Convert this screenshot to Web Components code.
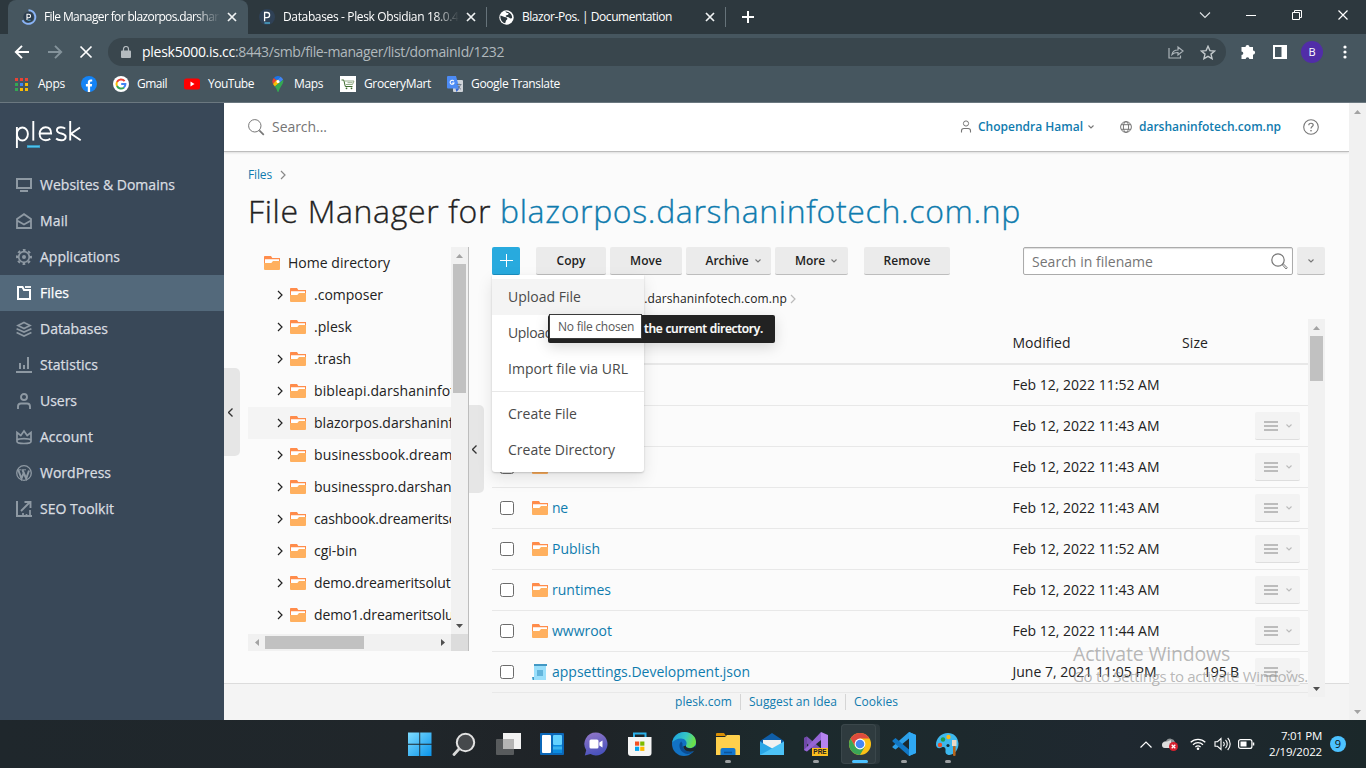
<!DOCTYPE html>
<html lang="en">
<head>
<meta charset="utf-8">
<title>File Manager</title>
<style>
html,body{margin:0;height:100%;overflow:hidden}
body{font:14px/20px "Open Sans","Noto Sans",sans-serif;color:#222;background:#fbfbfb}
</style>
</head>
<body>
<desktop-screen>
  <browser-chrome slot="chrome"></browser-chrome>
  <plesk-sidebar slot="side">
    <side-item icon="monitor" w="135">Websites &amp; Domains</side-item>
    <side-item icon="mail" w="28">Mail</side-item>
    <side-item icon="gear" w="80">Applications</side-item>
    <side-item icon="files" w="29" active>Files</side-item>
    <side-item icon="db" w="68">Databases</side-item>
    <side-item icon="stats" w="58">Statistics</side-item>
    <side-item icon="user" w="37">Users</side-item>
    <side-item icon="crown" w="53">Account</side-item>
    <side-item icon="wp" w="71">WordPress</side-item>
    <side-item icon="seo" w="74">SEO Toolkit</side-item>
  </plesk-sidebar>
  <plesk-main slot="main"></plesk-main>
  <win-taskbar slot="task"></win-taskbar>
</desktop-screen>
<script>
const S=(w,h,body,vb)=>`<svg width="${w}" height="${h}" viewBox="${vb||`0 0 ${w} ${h}`}" fill="none" xmlns="http://www.w3.org/2000/svg">${body}</svg>`;
const st=(d,c='currentColor',w=1.5,x='')=>`<path d="${d}" stroke="${c}" stroke-width="${w}" ${x}/>`;
const fl=(d,c='currentColor',x='')=>`<path d="${d}" fill="${c}" ${x}/>`;
const ICONS={
 /* browser */
 pleskload:S(16,16,`<circle cx="7.500" cy="8" r="5.200" fill="#2d3e50"/>${st('M7.500 1.200a6.800 6.800 0 1 1-6 10','#8ab4f8',2)}${st('M6 11V5.300h1.800a1.700 1.700 0 0 1 0 3.500H6','#fff',1.100)}${st('M6.500 11.200h3','#53bce6',.9)}`),
 pleskfav:S(16,16,`<circle cx="8" cy="8" r="8" fill="#2f4156"/>${st('M5.600 12.300V3.500h2.400a2.600 2.600 0 0 1 0 5.200H5.600','#fff',1.300)}${st('M5.500 14h5.500','#53bce6',1.200)}`),
 world:S(15,15,`<circle cx="7.500" cy="7.500" r="7.200" fill="#fff"/>${fl('M1.500 5.500C3.500 6 5 7.200 6.800 7.300c1.800.2 2 2 .7 2.700-1 .6-.5 2-1.400 3.300C3 13 .8 9 1.500 5.500zM6 1.500c1 .3 1.200 1.800 2.700 1.500 1.300-.3 1 1.200.3 1.700-.8.7-2.500.3-2.300 1.400.3 1.300 3 .6 3.600 1.700.5.8 1.700.6 2.700.4.600-3-1.500-6.700-7-6.700z','#2d383e')}`),
 close:S(10,10,st('M1 1l8 8M9 1l-8 8','#f0f3f4',1.700)),
 plus:S(12,12,st('M6 0v12M0 6h12','#fff',2)),
 wchev:S(12,8,st('M1 1.500l5 5 5-5','#dfe3e5',1.100)),
 wmin:S(10,10,st('M0 5.500h10','#fff',1)),
 wmax:S(10,10,st('M.5 2.500h7v7h-7zM2.500 2.500v-2h7v7h-2','#fff',1)),
 wclose:S(10,10,st('M.5.5l9 9M9.500.5l-9 9','#fff',1.200)),
 back:S(16,14,st('M15 7H2M8 .8L1.800 7 8 13.200','#fff',1.900)),
 fwd:S(16,14,st('M1 7h13M8 .8L14.200 7 8 13.200','#84939b',1.900)),
 stop:S(14,14,st('M1.500 1.500l11 11M12.500 1.500l-11 11','#fff',1.700)),
 lock:S(10,12,fl('M1 4.500h8a1 1 0 0 1 1 1V11a1 1 0 0 1-1 1H1a1 1 0 0 1-1-1V5.500a1 1 0 0 1 1-1z','#b4bbbf')+st('M2.500 5V3a2.500 2.500 0 0 1 5 0v2','#b4bbbf',1.200)),
 share:S(16,14,st('M1 3v10h11.500v-2.500','#abb3b8',1.200)+st('M4 9.500C4.500 6.500 6.500 5 10 5V2l5 4-5 4V7.500C7.500 7.400 5.500 8 4 9.500z','#abb3b8',1.200)),
 star:S(16,15,st('M8 1.300l1.900 4.300 4.700.4-3.600 3.100 1.100 4.600L8 11.300l-4.100 2.400L5 9.100 1.400 6l4.700-.4z','#c3c9cc',1.400)),
 ext:S(16,16,fl('M5.500 3a2 2 0 0 1 4 0H13v3.500a2 2 0 0 1 0 4.200V15H9.300a1.800 1.800 0 0 0-3.600 0H1.500v-4a1.800 1.800 0 0 0 0-3.600V3z','#fff')),
 panel:S(14,14,fl('M0 0h14v14H0zM2 2v10h6.500V2z','#fff','fill-rule="evenodd"')),
 dots:S(4,14,'<g fill="#fff"><circle cx="2" cy="2" r="1.600"/><circle cx="2" cy="7" r="1.600"/><circle cx="2" cy="12" r="1.600"/></g>'),
 apps:S(13,13,[['#ea4335','#ea4335','#ea4335'],['#34a853','#4285f4','#fbbc05'],['#34a853','#fbbc05','#fbbc05']].map((r,j)=>r.map((c,i)=>`<rect x="${i*5}" y="${j*5}" width="3" height="3" fill="${c}"/>`).join('')).join('')),
 fb:S(16,16,`<circle cx="8" cy="8" r="8" fill="#1483f5"/>${fl('M6.800 16v-5.600H4.900V8.100h1.900V6.500c0-2 1.100-3 2.900-3l1.500.1v1.900h-.9c-.9 0-1.200.5-1.200 1.100v1.500h2l-.3 2.300H9.100V16z','#fff')}`),
 google:S(16,16,`<circle cx="8" cy="8" r="8" fill="#fff"/>${st('M11.600 5.200A4.500 4.500 0 0 0 4 6','#ea4335',2)}${st('M4 5.900a4.600 4.600 0 0 0 0 4.200','#fbbc05',2)}${st('M4 10a4.500 4.500 0 0 0 7 1.400','#34a853',2)}${st('M8.200 8h4.200a4.500 4.500 0 0 1-1.500 3.500','#4285f4',2)}`),
 yt:S(16,12,`<rect y=".5" width="16" height="11" rx="2.500" fill="#f00"/>${fl('M6.500 3.500l4 2.500-4 2.500z','#fff')}`),
 maps:S(12,16,fl('M6 0a5.500 5.500 0 0 0-4.200 2l3 2.500L8.500.7A5 5 0 0 0 6 0z','#1a73e8')+fl('M1.800 2A5.400 5.400 0 0 0 1 8l3.800-3.500z','#ea4335')+fl('M8.500.7a5.500 5.500 0 0 1 2.600 3L7.500 7 4.800 4.500z','#4285f4')+fl('M1 8l1.800 2.600L7.900 6.500 5 3.600z','#fbbc04')+fl('M11.200 3.800C12 8 8 10 6.800 15.300c-.2.9-1.300.9-1.500 0-.5-2-1.500-3.500-2.500-4.700z','#34a853')+'<circle cx="6" cy="5.400" r="1.500" fill="#fff"/>'),
 grocery:S(16,16,`<rect width="16" height="16" fill="#fff"/>${st('M1.500 4h2.300l1.500 6.500h7.200','#3d6b2c',1)}${st('M5 5h9l-1.500 3.500H6M7.500 6.700h5','#8aa67e',.9)}<circle cx="6.500" cy="12.300" r=".9" fill="#3d6b2c"/><circle cx="11.500" cy="12.300" r=".9" fill="#3d6b2c"/>`),
 translate:S(16,16,`<rect x="6" y="4" width="10" height="12" rx="1" fill="#cfd3d8"/>${fl('M1 0h8l3.500 12.500H1a1 1 0 0 1-1-1V1a1 1 0 0 1 1-1z','#4c8bf5')}${st('M6.800 5.200A2 2 0 1 0 7 7H5.200','#fff',1.100)}${st('M9.800 8.500h4.700M12 7.500v1M13.500 8.500c-.6 2-1.700 3.500-3 4.500M11 10c.8 1.500 1.800 2.500 3 3.300','#6b7785',.9)}${fl('M9.500 16l3-3.500H8.500z','#3367d6')}`),
 /* sidebar */
 monitor:S(16,16,st('M1 2h14v9H1z','currentColor',2)+st('M4 14h8','currentColor',2)),
 mail:S(16,16,st('M1 6l7-4.800L15 6v9H1zM1 7.500l7 4 7-4','currentColor',1.800)),
 gear:S(16,16,'<circle cx="8" cy="8" r="5.300" stroke="currentColor" stroke-width="1.700"/><circle cx="8" cy="8" r="7" stroke="currentColor" stroke-width="2" stroke-dasharray="2.750 2.748" stroke-dashoffset="1.370"/><circle cx="8" cy="8" r="2" fill="currentColor"/>'),
 files:S(16,16,st('M2 2h4.500l1.500 3h6v9H2z','currentColor',2)+st('M9 2h6','currentColor',1.800)),
 db:S(16,16,st('M8 1.500l6 3-6 3-6-3z','currentColor',1.700)+st('M.6 7.800L8 11l7.400-3.200M.6 11.500L8 15l7.400-3.500','currentColor',1.700)),
 stats:S(16,16,st('M0 15h16','currentColor',2)+st('M4 12V6M8 12V8M12 12V0','currentColor',2)),
 user:S(16,16,'<circle cx="8" cy="4" r="3" stroke="currentColor" stroke-width="1.900"/>'+st('M2 16v-2.500c0-2 1.200-3 3-3h6c1.800 0 3 1 3 3V16','currentColor',1.900)),
 crown:S(16,16,st('M1 3.500v9c0 1.300 3 2 7 2s7-.7 7-2v-9l-3.800 3L8 2 4.800 6.500z','currentColor',1.700)+st('M1 11c2-1.800 12-1.800 14 0','currentColor',1.600)),
 wp:S(16,16,'<circle cx="8" cy="8" r="7.300" stroke="currentColor" stroke-width="1.300"/>'+st('M2.300 5l3.200 8.500L8 7M6.500 5l3.700 8.500L13 5.500','currentColor',2)+st('M1.500 4.800h4M6 4.800h4','currentColor',1)),
 seo:S(16,16,st('M1 0v15h15','currentColor',2)+st('M5 10l8.500-8.500M8.500 1h6V7','currentColor',1.900)+st('M7 15v-3M10.500 15v-2M14 15V9','currentColor',1.700)),
 /* plesk */
 logo:S(67,30,`<g stroke="#fff" stroke-width="1.900"><path d="M1.900 28V7"/><ellipse cx="7.400" cy="14" rx="5.500" ry="6.500"/><path d="M18.300 1v19.600"/><path d="M24.300 13.500h11.800c0-4-2.200-6.300-5.500-6.300-3.400 0-6 2.800-6 6.600s2.400 6.500 6 6.500c2 0 3.600-.6 4.700-1.500"/><path d="M50.200 8.700c-1-1-2.500-1.500-4.300-1.500-2.500 0-4 1-4 3 0 4.400 8.800 2.200 8.800 6.600 0 2.300-1.800 3.500-4.500 3.500-2.200 0-4-.6-5.100-1.800"/><path d="M55.200 1v19.600M65 7.500l-9 6.300 9.700 6.400"/></g><rect x="12" y="25" width="13" height="3" fill="#3795bd"/><path d="M12.500 26.500h12" stroke="#4fc3ea"/>`),
 search:S(17,17,'<circle cx="6.800" cy="6.800" r="6.200" stroke="currentColor" stroke-width="1"/>'+st('M11.300 11.300l4.500 4.500','currentColor',1.700)),
 mag:S(17,17,'<circle cx="7" cy="7" r="6.200" stroke="#777" stroke-width="1.200"/>'+st('M11.300 11.800l1-1 4 4-1.200 1.200z','#777',1)),
 suser:S(12,13,'<circle cx="6" cy="3.500" r="2.600" stroke="#777"/>'+st('M1.500 12.500v-1.700c0-1.500 1-2.300 2.300-2.300h4.400c1.300 0 2.300.8 2.300 2.300v1.700','#777',1.100)),
 globe:S(12,12,'<circle cx="6" cy="6" r="5.400" stroke="#777"/><ellipse cx="6" cy="6" rx="2.600" ry="5.400" stroke="#777"/>'+st('M1 3.700h10M1 8.300h10','#777',1)),
 help:S(16,16,'<circle cx="8" cy="8" r="7.300" stroke="#777" stroke-width="1.100"/>'+st('M5.800 6.200C5.800 3.500 10.300 3.700 10.200 6c0 1.500-2.200 1.700-2.200 3.500','#777',1.200)+'<rect x="7.300" y="11" width="1.400" height="1.400" fill="#777"/>'),
 down:S(6,4,st('M.5.5L3 3 5.500.5','currentColor',1.100)),
 right:S(6,10,st('M1 1l4 4-4 4','currentColor',1.200)),
 left:S(5,9,st('M4.500.5l-4 4 4 4','currentColor',1.300)),
 folder:S(16,14,fl('M0 .8A.8.8 0 0 1 .8 0H7l1.300 2H16v6H0z','#ff8c4b')+fl('M1 3.300h14V5L9 6.500V8H1z','#fff')+fl('M0 7h7.300l1.700-2h7v8a1 1 0 0 1-1 1H1a1 1 0 0 1-1-1z','#ffb05f')),
 json:S(16,16,fl('M2 0h13v2H2z','#4298c4')+fl('M2 2h12v14H0v-2h2z','#9adffb')+fl('M5 6h6v6H5z','#62b5dc')+fl('M0 13h2v3H1z','#4298c4')),
 bigplus:S(13,13,st('M6.500 0v13M0 6.500h13','#fff',1)),
 menu:S(14,10,st('M0 1h14M0 5h14M0 9h14','#bcbcbc',1.900)),
 tup:S(7,4,fl('M0 4L3.500 0 7 4z')),tdn:S(7,4,fl('M0 0l3.500 4L7 0z')),tlf:S(4,7,fl('M4 0L0 3.500 4 7z')),trt:S(4,7,fl('M0 0l4 3.500L0 7z')),
 /* taskbar */
 win:S(24,24,`<defs><linearGradient id="a" x2="1" y2="1"><stop stop-color="#7fdcff"/><stop offset="1" stop-color="#0a94ea"/></linearGradient></defs>${fl('M0 .5h11.300v11.300H0zM12.200.5h11.300v11.300H12.200zM0 12.700h11.300V24H0zM12.200 12.700h11.300V24H12.200z','url(#a)')}`),
 wsearch:S(24,24,`<circle cx="13.500" cy="10.500" r="8.700" fill="#46494c" stroke="#e2e2e2" stroke-width="2"/>${st('M7 17l-5 5.500','#d8d8d8',2.800,'stroke-linecap="round"')}`),
 tview:S(25,24,`<rect x="7" y="1" width="18" height="16" fill="#f2f2f2"/><rect x="0" y="7" width="18" height="16" rx="1" fill="#636566" opacity=".85"/><rect x="7" y="7" width="11" height="10" fill="#b4b4b4"/>`),
 widgets:S(24,22,`<rect width="24" height="22" rx="1" fill="#0b67b8"/><rect x="2" y="2" width="9" height="18" rx="1" fill="#fff"/><rect x="13" y="2" width="9" height="10" rx="1" fill="#63d1ff"/><rect x="13" y="12" width="9" height="8" fill="#0b8be0"/><path d="M13 15h9" stroke="#38b2ef" stroke-width="3"/>`),
 chat:S(24,24,`<defs><linearGradient id="b" x2="0.3" y2="1"><stop stop-color="#9578c8"/><stop offset="1" stop-color="#4b53bc"/></linearGradient></defs>${fl('M12 .5a11.500 11.500 0 1 1-5.500 21.600L.8 23.500l1.400-5.300A11.500 11.500 0 0 1 12 .5z','url(#b)')}<rect x="5.500" y="7.500" width="9" height="9" rx="1.500" fill="#fff"/>${fl('M15.300 10.500l3.200-2v7l-3.200-2z','#fff')}`),
 store:S(24,24,`${st('M6 6V1.500h11.500V6','#2cb1ea',2)}<path d="M0 5h23.500v16a3 3 0 0 1-3 3H3a3 3 0 0 1-3-3z" fill="#f5f5f5"/><path d="M7 9.500h4.200v4.200H7z" fill="#f25022"/><path d="M12.200 9.500h4.200v4.200h-4.200z" fill="#7fba00"/><path d="M7 14.700h4.200v4.200H7z" fill="#00a4ef"/><path d="M12.200 14.700h4.200v4.200h-4.200z" fill="#ffb900"/>`),
 edge:S(24,24,`<defs><linearGradient id="c" x2="1" y2=".3"><stop stop-color="#1a9fe0"/><stop offset=".6" stop-color="#35c6c6"/><stop offset="1" stop-color="#6be04b"/></linearGradient></defs><circle cx="12" cy="12" r="12" fill="#1272c4"/>${fl('M.2 10.500C1.500 4 6.500 0 12.500 0 19 0 24 4.500 24 10c0 3.500-2.600 6-6 6-3 0-4.500-1.300-4-2.500 2-3.500-1-7-5-7-4 0-7 2-8.800 4z','url(#c)')}${fl('M9.200 9.500C6 12 7 19 13 21.500c3 1 6.500 0 8.700-2.500C16 21.500 9.500 17 10.500 11.500z','#0b4c93')}${fl('M14 13.500c-.5 1.500 1 2.800 4 2.800 2.500 0 4.500-1 5.600-3L24 18l-2.300 1c-4 1.500-9.500.5-10.500-4.500z','#1e272b')}`),
 explorer:S(24,22,`${fl('M0 1a1 1 0 0 1 1-1h7l2 3H0z','#d98e04')}<path d="M0 4h9l2-2h12a1 1 0 0 1 1 1v19H0z" fill="#ffd04c"/><path d="M4.500 22v-5a2 2 0 0 1 2-2h11a2 2 0 0 1 2 2v5z" fill="#1377cf"/><path d="M8 19.500h8" stroke="#0c559c" stroke-width="1.600"/>`),
 wmail:S(24,22,`${fl('M0 8L12 0l12 8v13H0z','#0f5ea8')}${fl('M3 7h18v8l-9 5-9-5z','#f1f1f1')}${fl('M0 8.500L24 22H0z','#29a5e6')}${fl('M24 8.500V22H0z','#4dc3f7')}`),
 vs:S(24,24,fl('M0 6l3-1.500 14 12L17 24 0 9z','#7c55b8')+fl('M17 0l7 3v18l-7 3z','#b583f0')+fl('M0 18V6l3-1.500V19.500z','#6f48a8')+fl('M17 0v8L3 19.500 0 18z','#9565d6')),
 chrome:S(24,24,`<circle cx="12" cy="12" r="11" fill="#fbc116"/>${fl('M2.500 6.500A11 11 0 0 1 21.500 6.500H12L7.200 14.700z','#dd4b3e')}${fl('M2.500 6.500a11 11 0 0 0 9.500 16.500l4.800-8.300H7.200z','#3aa757')}<circle cx="12" cy="12" r="5.400" fill="#fff"/><circle cx="12" cy="12" r="4.300" fill="#4587f3"/>`),
 vscode:S(24,24,fl('M17 0l7 3v18l-7 3V6.500L3.500 17.500.5 15.500v-1L17 0z','#2b9fe8')+fl('M.5 8.500l3-2.500L17 17.500V24L.5 9.500z','#1177c4')+fl('M17 0l7 3v18l-7 3z','#2fa8f3')),
 paint:S(24,24,`${fl('M12 1C5 1 0 6.500 0 12.500 0 16 3 17 5.500 15.500c2.500-1.300 4.500 0 4 3C9 21.500 11 23 13.500 23 19 22 22.500 17.500 22.500 11.500 22 5 17.500 1 12 1z','#3db8ee')}<circle cx="4" cy="13" r="2.200" fill="#e9502b"/><circle cx="7" cy="7.500" r="2.200" fill="#1f9e48"/><circle cx="12.500" cy="5" r="2.200" fill="#f6b91a"/><circle cx="12" cy="13.500" r="1.600" fill="#16303c"/><rect x="17" y="14" width="2.600" height="10" rx="1" fill="#b5651d"/><rect x="16" y="8" width="4.500" height="6" fill="#ead9c5"/>`),
 tchev:S(12,7,st('M.5 6.500L6 1l5.500 5.500','#fff',1.200)),
 cloud:S(16,14,`${fl('M4 11a3.500 3.500 0 0 1 0-7 5 5 0 0 1 9 1v6z','#8f9496')}${fl('M3 11a3 3 0 0 1 0-6c2-.5 4-1 6-2v8z','#dcdcdc')}<circle cx="11.500" cy="9.500" r="4.500" fill="#d5202e"/>${st('M9.700 7.700l3.600 3.600M13.300 7.700l-3.600 3.600','#fff',1.300)}`),
 wifi:S(16,12,st('M.7 4.300a10.500 10.500 0 0 1 14.600 0M3 6.700a7.200 7.200 0 0 1 10 0M5.400 9a3.800 3.800 0 0 1 5.200 0','#fff',1.200)+'<circle cx="8" cy="10.700" r="1.300" fill="#fff"/>'),
 vol:S(17,14,st('M1 4.700h2.500L7 1.500v11L3.500 9.300H1z','#fff',1.100)+st('M9.300 4.800a3 3 0 0 1 0 4.400M11.500 2.800a6 6 0 0 1 0 8.400M13.700 1a8.500 8.500 0 0 1 0 12','#fff',1.100)),
 batt:S(17,10,'<rect x=".6" y=".6" width="13.300" height="8.800" rx="2" stroke="#fff" stroke-width="1.200"/><rect x="2.500" y="2.500" width="6" height="5" fill="#fff"/>'+st('M15.500 3.500v3','#fff',1.500))
};
const def=(n,html,setup)=>customElements.define(n,class extends HTMLElement{
  connectedCallback(){ if(this.shadowRoot)return; const r=this.attachShadow({mode:'open'}); r.innerHTML=typeof html==='function'?html(this):html; if(setup)setup(this,r);}
});
const A=(e,n,d='')=>e.getAttribute(n)??d;
/* icon and label for a flex row, each with its left margin */
const I=(n,ml=0,ex='')=>`<x-icon name="${n}" style="margin-left:${ml}px;${ex}"></x-icon>`;
const T=(t,w,ml=0,ex='')=>`<fit-text w="${w}" style="margin-left:${ml}px;${ex}">${t}</fit-text>`;

def('desktop-screen',`<style>:host{display:grid;width:1366px;height:768px;grid-template:103px 617px 48px / 224px 1fr;position:relative;overflow:hidden}
.c,.t{grid-column:1/3}.m{min-width:0}</style><div class="c"><slot name="chrome"></slot></div><slot name="side"></slot><div class="m"><slot name="main"></slot></div><div class="t"><slot name="task"></slot></div><os-watermark></os-watermark>`);

def('os-watermark',`<style>:host{display:flex;flex-direction:column;position:absolute;z-index:20;left:1073px;top:642px;color:rgba(140,140,140,.62)}</style>
<fit-text w="157" style="font-size:19.5px;line-height:24px">Activate Windows</fit-text><fit-text w="235" style="font-size:15px;line-height:20px">Go to Settings to activate Windows.</fit-text>`);

def('browser-tab',e=>`<style>:host{display:flex;align-items:center;height:34px;box-sizing:border-box;color:#fff;font-size:12px}
:host([active]){background:#46565f;border-radius:8px 8px 0 0;height:34px}
.t{overflow:hidden;flex:none}.fade{-webkit-mask:linear-gradient(90deg,#000 86%,transparent);mask:linear-gradient(90deg,#000 86%,transparent)}</style>
${I(A(e,'icon'),A(e,'im'))}<div class="t ${A(e,'fade')?'fade':''}" style="margin-left:${A(e,'tm')}px;width:${A(e,'tw')}px"><fit-text w="${A(e,'w')}"><slot></slot></fit-text></div>${I('close',A(e,'cm'))}`);

def('book-mark',e=>`<style>:host{display:flex;align-items:center;color:#fff;font-size:12px}</style>${I(A(e,'icon'))}${T('<slot></slot>',A(e,'w'),A(e,'gap','8'))}`);

def('browser-chrome',`<style>:host{display:flex;flex-direction:column;height:103px;background:#46565f;font-size:12px;color:#fff}
.tabs{display:flex;height:34px;background:#2d383e;padding-left:8px;box-sizing:border-box;align-items:center}
.sep{width:1px;height:20px;background:#66737a}
.bar{display:flex;height:36px;align-items:center}
.omni{display:flex;align-items:center;width:1118px;height:28px;border-radius:14px;background:#39464d;margin-left:15px;font-size:14px;flex:none}
.av{width:22px;height:22px;border-radius:50%;background:#512da8;display:flex;align-items:center;justify-content:center;font-size:11px;margin-left:14px}
.marks{display:flex;height:28px;align-items:center;border-bottom:1px solid #6b7880;padding-bottom:4px}</style>
<div class="tabs"><browser-tab active icon="pleskload" im="13" tm="7" tw="176" w="196" cm="7" fade="1" style="width:240px">File Manager for blazorpos.darshaninfo</browser-tab>
<browser-tab icon="pleskfav" im="11" tm="8" tw="176" w="182" cm="7" fade="1">Databases - Plesk Obsidian 18.0.42</browser-tab><div class="sep" style="margin-left:10px"></div>
<browser-tab icon="world" im="12" tm="8" tw="155" w="150" cm="28">Blazor-Pos. | Documentation</browser-tab><div class="sep" style="margin-left:10px"></div>
${I('plus',16)}${I('wchev',445,'margin-top:-5px')}${I('wmin',35,'margin-top:-5px')}${I('wmax',36,'margin-top:-5px')}${I('wclose',36,'margin-top:-5px')}</div>
<div class="bar">${I('back',14)}${I('fwd',17)}${I('stop',16)}<div class="omni">${I('lock',13)}${T('plesk5000.is.cc',93,11)}${T(':8443/smb/file-manager/list/domainId/1232',269,0,'color:#b1b9bd')}${I('share',664)}${I('star',16)}</div>
${I('ext',14)}${I('panel',17)}<div class="av">B</div>${I('dots',20)}</div>
<div class="marks"><book-mark icon="apps" gap="10" w="27" style="margin-left:15px">Apps</book-mark>${I('fb',16)}
<book-mark icon="google" w="30" style="margin-left:16px">Gmail</book-mark><book-mark icon="yt" w="46" style="margin-left:17px">YouTube</book-mark>
<book-mark icon="maps" w="29" gap="10" style="margin-left:18px">Maps</book-mark><book-mark icon="grocery" w="67" style="margin-left:17px">GroceryMart</book-mark>
<book-mark icon="translate" w="89" style="margin-left:16px">Google Translate</book-mark></div>`);

def('side-item',e=>`<style>:host{display:flex;align-items:center;height:36px;padding-left:16px;color:#8e99a3}
.l{color:#dadee1;margin-left:8px;-webkit-text-stroke:.25px}:host([active]){background:#53697b;color:#fff}:host([active]) .l{color:#fff}</style>${I(A(e,'icon'))}<fit-text class="l" w="${A(e,'w')}"><slot></slot></fit-text>`);
def('plesk-sidebar',`<style>:host{display:block;background:#394858;height:617px}.logo{height:64px;padding:17px 0 0 15px;box-sizing:border-box}</style><div class="logo">${I('logo')}</div><slot></slot>`);

def('pull-tab',`<style>:host{display:flex;position:absolute;width:16px;height:88px;background:#e6e6e6;border-radius:0 5px 5px 0;align-items:center;padding-left:4px;box-sizing:border-box;color:#333}</style>${I('left')}`);

def('scroll-bar',e=>{const h=e.hasAttribute('horizontal'),s=A(e,'thumb'),c=A(e,'first','#a3a3a3'),d=A(e,'last','#505050');
return `<style>:host{display:flex;flex:none;background:#f1f1f1;${h?'height:17px':'width:17px;flex-direction:column'};align-items:center;box-sizing:border-box}
.a{width:17px;height:17px;flex:none;display:flex;align-items:center;justify-content:center;color:${c}}.b{color:${d};margin-${h?'left':'top'}:auto}
.th{background:#c1c1c1;flex:none;${h?`height:13px;width:${s}px`:`width:13px;height:${s}px`}}</style><div class="a">${I(h?'tlf':'tup')}</div>${s?'<div class="th"></div>':''}<div class="a b">${I(h?'trt':'tdn')}</div>`});

def('tree-row',e=>`<style>:host{display:flex;align-items:center;height:32px;color:#222;overflow:hidden}:host([sel]){background:#f4f4f4}</style>
${e.hasAttribute('root')?I('folder',16):I('right',29)+I('folder',7)}${T('<slot></slot>',A(e,'w'),8)}`);

def('dir-tree',`<style>:host{display:grid;grid-template:387px 17px / 203px 17px;border-right:1px solid #bdbdbd;height:404px;flex:none}.l{overflow:hidden}.c{background:#dcdcdc}</style>
<div class="l"><tree-row root w="102">Home directory</tree-row>
${[['.composer',69],['.plesk',38],['.trash',37],['bibleapi.darshaninfotech.com.np',218],['blazorpos.darshaninfotech.com.np',229],['businessbook.dreameritsolution.com',247],['businesspro.darshaninfotech.com.np',244],['cashbook.dreameritsolution.com',211],['cgi-bin',43],['demo.dreameritsolution.com',188],['demo1.dreameritsolution.com',196]].map((r,i)=>`<tree-row w="${r[1]}" ${i==4?'sel':''}>${r[0]}</tree-row>`).join('')}</div>
<scroll-bar thumb="129"></scroll-bar><scroll-bar horizontal thumb="99"></scroll-bar><div class="c"></div>`);

def('tool-button',e=>`<style>:host{display:flex;align-items:center;justify-content:center;height:28px;box-sizing:border-box;background:#ebebeb;border-bottom:1px solid #bdbdbd;border-radius:2px;font-size:12px;font-weight:600;flex:none;color:#222}:host([menu][w]){padding-left:9px}</style>
${A(e,'w')?`<fit-text w="${A(e,'w')}"><slot></slot></fit-text>`:'<slot></slot>'}${e.hasAttribute('menu')?I('down',A(e,'w')?6:0,'color:#777;margin-top:1px'):''}`);

def('file-row',e=>`<style>:host{display:grid;grid-template-columns:40px 480px 170px 57px 1fr;align-items:center;height:41px;border-bottom:1px solid #e8e8e8;box-sizing:border-box;color:#222}
.cb{width:14px;height:14px;box-sizing:border-box;border:1px solid #6b6b6b;border-radius:2.500px;background:#fff;margin-left:8px}
.n{display:flex;align-items:center;color:#0f7bae}.b{width:45px;height:28px;background:#f3f3f3;border-bottom:1px solid #dedede;border-radius:2px;box-sizing:border-box;display:flex;align-items:center;margin-left:16px;color:#bbb}</style>
<div>${A(e,'name')?'<div class="cb"></div>':''}</div><div class="n">${A(e,'name')?I(A(e,'icon','folder'))+(A(e,'w')?T(A(e,'name'),A(e,'w'),4):''):''}</div>
<div>${T(A(e,'date'),A(e,'dw','147'),.5)}</div><div style="display:flex;justify-content:flex-end">${A(e,'size')?T(A(e,'size'),36):''}</div>
${e.hasAttribute('up')?'<div></div>':`<div class="b">${I('menu',9)}${I('down',8)}</div>`}`);

def('file-table',`<style>:host{display:flex;height:375px}.r{width:816px;flex:none}
.h{display:grid;grid-template-columns:520px 170px 1fr;height:46px;box-sizing:border-box;border-bottom:2px solid #e8e8e8;align-items:center;padding-top:3px}</style>
<div class="r"><div class="h"><div></div><div>${T('Modified',58,.5)}</div><div>${T('Size',26)}</div></div>
<file-row up date="Feb 12, 2022 11:52 AM"></file-row>
${[['&nbsp;','',43],['&nbsp;','',43],['ne',16,43],['Publish',48,52],['runtimes',59,43],['wwwroot',60,44]].map(r=>`<file-row name="${r[0]}" w="${r[1]}" date="Feb 12, 2022 11:${r[2]} AM"></file-row>`).join('')}
<file-row icon="json" name="appsettings.Development.json" w="198" date="June 7, 2021 11:05 PM" dw="144" size="195 B"></file-row></div>
<scroll-bar thumb="45" style="height:378px"></scroll-bar>`);

def('menu-item',e=>`<style>:host{display:flex;height:36px;align-items:center;padding-left:16px;color:#4a4a4a}:host([hover]){background:#f4f4f4}</style>${T('<slot></slot>',A(e,'w'))}`);
def('add-menu',`<style>:host{display:block;position:absolute;left:268px;top:172px;width:152px;height:197px;padding:4px 0;box-sizing:border-box;background:#fff;border-radius:0 0 3px 3px;box-shadow:0 1px 2px rgba(0,0,0,.18),0 6px 16px rgba(0,0,0,.1);z-index:3}
.d{height:1px;background:#e8e8e8;margin:4px 0}.tip{position:absolute;left:56px;top:40px;width:227px;height:28px;background:#222;border-radius:2px;color:#fff;font-weight:600;-webkit-text-stroke:.2px;font-size:12px;display:flex;align-items:center;box-shadow:0 4px 14px rgba(0,0,0,.15)}
.nat{position:absolute;left:57px;top:39px;width:93px;height:25px;box-sizing:border-box;background:#fff;border:1px solid #3a3a3a;display:flex;align-items:center;color:#575757;font-size:12px}</style>
<menu-item hover w="73">Upload File</menu-item><menu-item w="105">Upload Directory</menu-item><menu-item w="120">Import file via URL</menu-item><div class="d"></div><menu-item w="69">Create File</menu-item><menu-item w="107">Create Directory</menu-item>
<div class="tip">${T('the current directory.',119,96)}</div><div class="nat">${T('No file chosen',76,8)}</div>`);

def('plesk-main',`<style>:host{display:flex;height:617px;position:relative;background:#fbfbfb}
.col{width:1125px;display:flex;flex-direction:column;height:617px;flex:none}
.head{height:49px;flex:none;box-sizing:border-box;background:#fff;border-bottom:1px solid #bdbdbd;box-shadow:0 1px 2px rgba(0,0,0,.12);display:flex;align-items:center;font-size:12px;font-weight:600;color:#0f7bae}
.body{flex:1;min-height:0;padding:12px 24px 0;position:relative;z-index:1}
.bc{display:flex;align-items:center;height:22px;font-size:12px;color:#0f7bae}
h1{margin:2px 0 0;display:flex;font-size:32px;font-weight:300;-webkit-text-stroke:.35px;line-height:46px;color:#222;height:46px}h1 .b{color:#0f7bae}
.fm{display:flex;margin-top:13px}.right{margin-left:23px;width:833px;flex:none}
.tb{display:flex}.sf{width:270px;height:28px;box-sizing:border-box;border:1px solid #ababab;box-shadow:inset 0 1px 1px #ddd;border-radius:2px;background:#fff;display:flex;align-items:center;color:#757575;margin-left:73px;padding-top:1px}
.path{display:flex;height:44px;align-items:center;font-size:12px;padding-left:96px;padding-top:4px;box-sizing:border-box}
.foot{height:37px;flex:none;box-sizing:border-box;background:#f4f4f4;border-top:1px solid #dcdcdc;display:flex;align-items:center;font-size:12px;color:#0f7bae}
.s{width:1px;height:16px;background:#d5d5d5;margin-left:8px}</style>
<div class="col"><div class="head">${I('search',24,'color:#777')}${T('Search...',55,7,'font-size:14px;font-weight:400;color:#757575')}${I('suser',633,'margin-top:-1px')}${T('Chopendra Hamal',105,6)}${I('down',5,'color:#777')}${I('globe',26)}${T('darshaninfotech.com.np',142,7)}${I('help',22)}</div>
<div class="body"><div class="bc">${T('Files',24)}${I('right',8,'color:#888')}</div>
<h1>${T('File Manager for',243)}<span class="b">${T('blazorpos.darshaninfotech.com.np',521,9)}</span></h1>
<div class="fm"><dir-tree></dir-tree><div class="right"><div class="tb">
<tool-button style="width:28px;background:#28aade;border-color:#1c8fc0">${I('bigplus')}</tool-button>
<tool-button w="29" style="width:70px;margin-left:16px">Copy</tool-button><tool-button w="32" style="width:72px;margin-left:4px">Move</tool-button>
<tool-button w="43" menu style="width:85px;margin-left:4px">Archive</tool-button><tool-button w="30" menu style="width:73px;margin-left:4px">More</tool-button>
<tool-button w="47" style="width:86px;margin-left:16px">Remove</tool-button>
<div class="sf">${T('Search in filename',121,8)}${I('mag',118,'margin-top:-1px')}</div><tool-button menu style="width:28px;margin-left:4px"></tool-button></div>
<div class="path">${T('blazorpos.darshaninfotech.com.np',199)}${I('right',3,'color:#bbb')}</div>
<file-table></file-table></div></div></div>
<div class="foot">${T('plesk.com',57,451)}<i class="s"></i>${T('Suggest an Idea',88,8)}<i class="s"></i>${T('Cookies',44,8)}</div></div>
<scroll-bar last="#a3a3a3"></scroll-bar>
<pull-tab style="left:0;top:265px"></pull-tab><pull-tab style="left:245px;top:302px;width:15px;padding-left:3px;z-index:2"></pull-tab><add-menu></add-menu>`);

def('task-icon',e=>`<style>:host{display:flex;width:44px;height:48px;align-items:center;justify-content:center;position:relative;flex:none}
:host([on])::before{content:"";position:absolute;left:3px;top:4px;width:35px;height:40px;border-radius:4px;background:#2f3b3f;box-shadow:inset 0 0 0 1px #3b474b,4px 0 0 #2c383c}
x-icon{position:relative}.d{position:absolute;bottom:5px;left:19px;width:6px;height:3px;border-radius:2px;background:#9b9fa1}.w{width:16px;left:14px;background:#4cc2ff}
.p{position:absolute;left:18px;top:28px;width:16px;height:8px;background:#fcbf1e;color:#222;font:700 6.500px/8px "Liberation Sans",sans-serif;text-align:center}</style>${I(A(e,'i'))}${A(e,'i')=='vs'?'<div class="p">PRE</div>':''}${e.hasAttribute('run')?`<div class="d ${e.hasAttribute('on')?'w':''}"></div>`:''}`);
def('win-taskbar',`<style>:host{display:flex;height:48px;background:linear-gradient(90deg,#1f272c,#20262a 30%,#1f2327 42%,#1c2a2d 58%,#1d292d 70%,#1f2830 82%,#1b282a);align-items:center;color:#fff;font-size:11.500px;padding-left:398px}
.clk{display:flex;flex-direction:column;align-items:flex-end;width:54px;line-height:16px}.n{width:16px;height:16px;border-radius:50%;background:#4cc2ff;color:#111;display:flex;align-items:center;justify-content:center;margin-left:8px;font-size:11px}</style>
${['win','wsearch','tview','widgets','chat','store','edge','explorer run','wmail','vs run','chrome run on','vscode run','paint run'].map(s=>{const[a,...b]=s.split(' ');return`<task-icon i="${a}" ${b.join(' ')}></task-icon>`}).join('')}
${I('tchev',170)}${I('cloud',10)}${I('wifi',12)}${I('vol',8)}${I('batt',7)}<div class="clk" style="margin-left:13px">${T('7:01 PM',41)}${T('2/19/2022',53)}</div><div class="n">9</div>`);

def('x-icon',e=>`<style>:host{display:inline-flex;flex:none}svg{display:block}</style>${ICONS[A(e,'name')]||''}`);
/* single-line label whose tracking is adjusted to fill the width given in "w" */
def('fit-text','<style>:host{display:inline-block;white-space:nowrap;flex:none}</style><span><slot></slot></span>',(e,r)=>{
  const s=r.querySelector('span'),w=+A(e,'w'),m=s.getBoundingClientRect().width;
  const deep=n=>n.nodeName=='SLOT'?n.assignedNodes({flatten:true}).map(x=>x.textContent).join(''):n.textContent;
  const k=[...e.childNodes].map(deep).join('').trim().length||1;
  if(w&&m){s.style.letterSpacing=((w-m)/k).toFixed(3)+'px';e.style.width=w+'px';}
});
</script>
</body>
</html>
